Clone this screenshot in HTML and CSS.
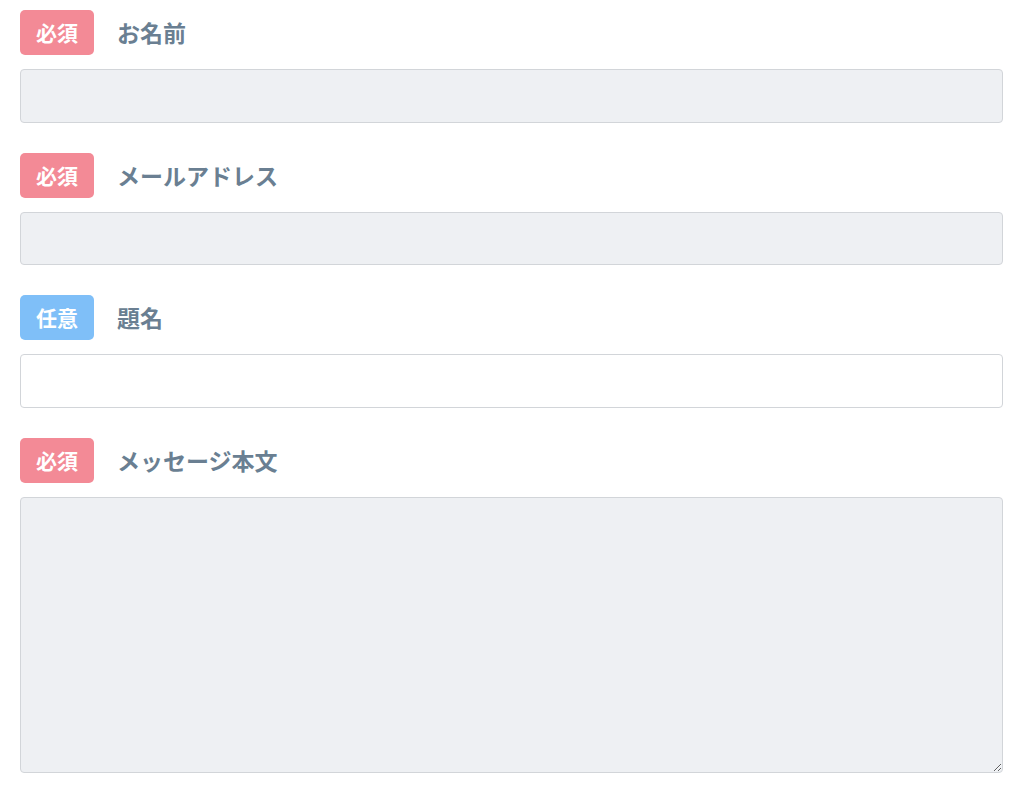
FILE: index.html
```html
<!DOCTYPE html>
<html lang="ja">
<head>
	<meta charset="UTF-8">
	<title>お問い合わせ</title>
	<link rel="stylesheet" href="styles.css">
</head>
<body>
	<form class="contact_form">
		<div class="field">
			<div class="field_head">
				<span class="badge required">必須</span>
				<label class="label" for="name">お名前</label>
			</div>
			<input class="input filled" id="name" type="text">
		</div>
		<div class="field">
			<div class="field_head">
				<span class="badge required">必須</span>
				<label class="label" for="mail">メールアドレス</label>
			</div>
			<input class="input filled" id="mail" type="email">
		</div>
		<div class="field">
			<div class="field_head">
				<span class="badge optional">任意</span>
				<label class="label" for="subject">題名</label>
			</div>
			<input class="input" id="subject" type="text">
		</div>
		<div class="field">
			<div class="field_head">
				<span class="badge required">必須</span>
				<label class="label" for="message">メッセージ本文</label>
			</div>
			<textarea class="input filled message" id="message"></textarea>
		</div>
	</form>
</body>
</html>
```

FILE: styles.css
```css
*{
	margin: 0;
	padding: 0;
	box-sizing: border-box;
}
body{
	background-color: #fff;
	font-family: "Noto Sans CJK JP", "Noto Sans", sans-serif;
}
.contact_form{
	display: flex;
	flex-direction: column;
	gap: 30px;
	padding: 10px 21px 0 20px;
}
.field{
	display: flex;
	flex-direction: column;
	gap: 14px;
}
.field_head{
	display: flex;
	align-items: center;
	gap: 23px;
	height: 45px;
}
.badge{
	display: flex;
	align-items: center;
	justify-content: center;
	width: 74px;
	height: 45px;
	border-radius: 5px;
	color: #fff;
	font-size: 21px;
	font-weight: bold;
	line-height: 1;
}
.required{
	background-color: #f38a96;
}
.optional{
	background-color: #7fbff8;
}
.label{
	color: #6a7f92;
	font-size: 23px;
	font-weight: bold;
	line-height: 1;
}
.input{
	display: block;
	width: 100%;
	height: 53.5px;
	border: 1px solid #d2d5d9;
	border-radius: 4px;
	background-color: #fff;
	font-family: inherit;
	font-size: 18px;
	padding: 0 12px;
}
.filled{
	background-color: #eef0f3;
}
.message{
	height: 276.5px;
	resize: vertical;
	padding: 12px;
}
```
